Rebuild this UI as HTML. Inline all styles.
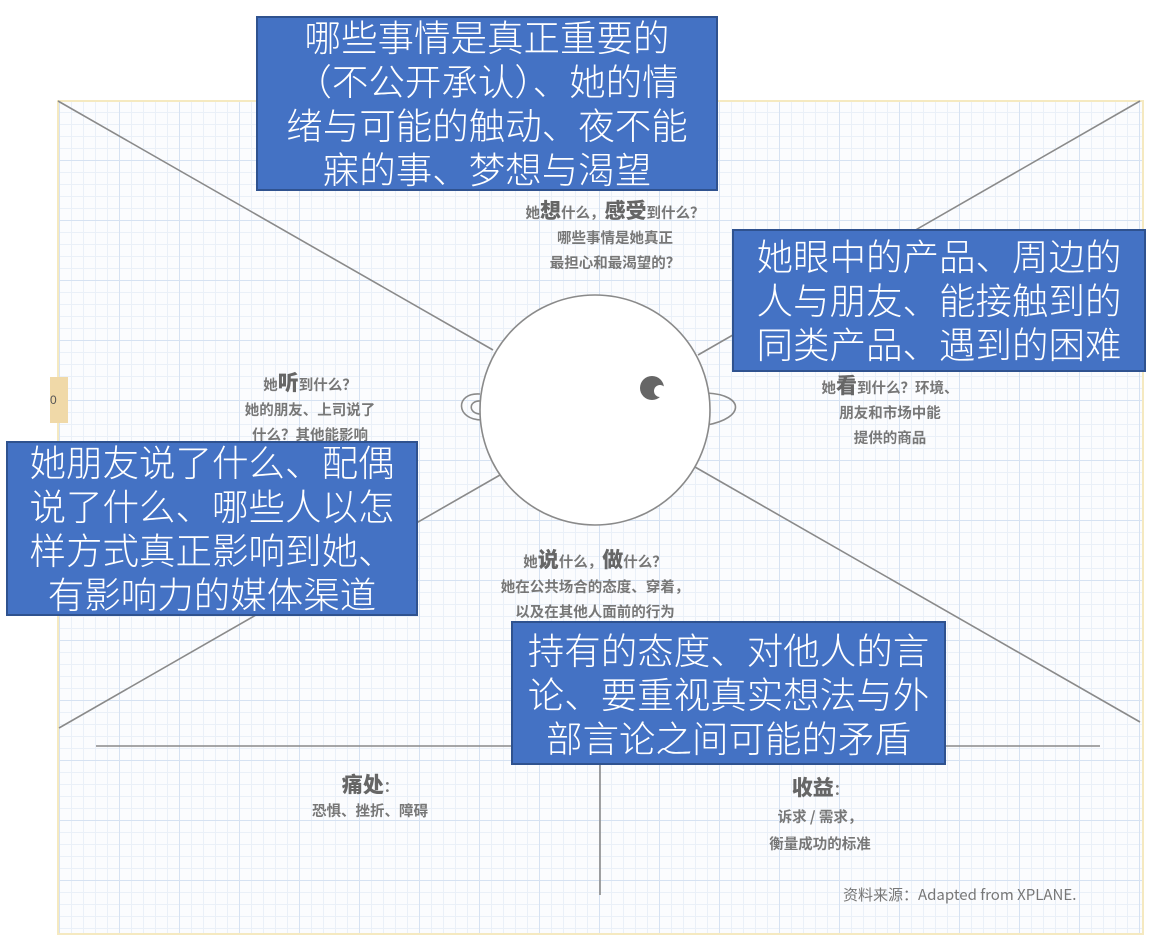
<!DOCTYPE html>
<html><head><meta charset="utf-8"><style>
body{margin:0;width:1149px;height:938px;background:#fff;position:relative;overflow:hidden;font-family:"Liberation Sans","Noto Sans CJK SC",sans-serif}
.paper{position:absolute;left:57px;top:100px;width:1083px;height:831px;border:2px solid #f5e9c0;
background-color:#fbfcfe;
background-image:linear-gradient(#d6e2f2 1px,transparent 1px),linear-gradient(90deg,#d6e2f2 1px,transparent 1px),linear-gradient(#eaf0f8 1px,transparent 1px),linear-gradient(90deg,#eaf0f8 1px,transparent 1px);
background-size:60px 60px,60px 60px,12px 12px,12px 12px;background-position:0 -2px}
svg{position:absolute;left:0;top:0}
.g{position:absolute;color:#777;font-size:14.5px;text-align:center;line-height:25px;font-weight:bold;font-family:"Noto Sans CJK SC",sans-serif;white-space:nowrap}
.g b{font-size:21px;color:#666}
.box{position:absolute;background:#4472c4;border:2px solid #2f528f;color:#fff;font-size:36.5px;line-height:44px;text-align:center;box-sizing:border-box;font-family:"Noto Sans CJK SC",sans-serif;font-weight:300;white-space:nowrap;overflow:hidden}
.box div{position:relative;top:-4px}
</style></head><body>
<div class="paper"></div>
<div style="position:absolute;left:50px;top:377px;width:18px;height:46px;background:#f0d9a8;font-size:12px;color:#555;line-height:46px">0</div>
<svg width="1149" height="938">
<g stroke="#8a8a8a" stroke-width="1.6" fill="none">
<line x1="58" y1="101" x2="493" y2="350"/>
<line x1="1140" y1="101" x2="698" y2="355"/>
<line x1="59" y1="728" x2="500" y2="475"/>
<line x1="1140" y1="722" x2="695" y2="467"/>
<line x1="96" y1="746" x2="1100" y2="746"/>
<line x1="600" y1="760" x2="600" y2="895"/>
<path d="M480 394 C455 392 455 420 482 420"/>
<path d="M481 401 C468 400 468 414 481 414"/>
<path d="M707 393 C745 395 745 418 707 425"/>
<path d="M615 473 C620 490 640 498 663 498"/>
</g>
<circle cx="595" cy="410" r="115" fill="#fff" stroke="#8a8a8a" stroke-width="1.6"/>
<circle cx="652" cy="388" r="12" fill="#666"/>
<circle cx="660" cy="391" r="6" fill="#fff"/>
</svg>
<div class="g" style="left:490px;top:198px;width:250px">她<b>想</b>什么，<b>感受</b>到什么？<br>哪些事情是她真正<br>最担心和最渴望的？</div>
<div class="g" style="left:220px;top:370px;width:180px">她<b>听</b>到什么？<br>她的朋友、上司说了<br>什么？其他能影响</div>
<div class="g" style="left:800px;top:373px;width:180px">她<b>看</b>到什么？环境、<br>朋友和市场中能<br>提供的商品</div>
<div class="g" style="left:460px;top:547px;width:270px">她<b>说</b>什么，<b>做</b>什么？<br>她在公共场合的态度、穿着，<br>以及在其他人面前的行为</div>
<div class="g" style="left:280px;top:772px;width:180px;line-height:24px"><b>痛处</b>：<br>恐惧、挫折、障碍</div>
<div class="g" style="left:730px;top:774px;width:180px;line-height:27px"><b>收益</b>：<br>诉求 / 需求，<br>衡量成功的标准</div>
<div class="g" style="left:843px;top:882px;width:280px;text-align:left;font-weight:normal;font-size:15px">资料来源：Adapted from XPLANE.</div>
<div class="box" style="left:256px;top:16px;width:462px;height:175px;padding-top:0"><div>哪些事情是真正重要的<br>（不公开承认）、她的情<br>绪与可能的触动、夜不能<br>寐的事、梦想与渴望</div></div>
<div class="box" style="left:732px;top:229px;width:414px;height:143px;padding-top:6px"><div>她眼中的产品、周边的<br>人与朋友、能接触到的<br>同类产品、遇到的困难</div></div>
<div class="box" style="left:6px;top:441px;width:412px;height:175px;padding-top:0"><div>她朋友说了什么、配偶<br>说了什么、哪些人以怎<br>样方式真正影响到她、<br>有影响力的媒体渠道</div></div>
<div class="box" style="left:511px;top:621px;width:435px;height:144px;padding-top:8px"><div>持有的态度、对他人的言<br>论、要重视真实想法与外<br>部言论之间可能的矛盾</div></div>
</body></html>
